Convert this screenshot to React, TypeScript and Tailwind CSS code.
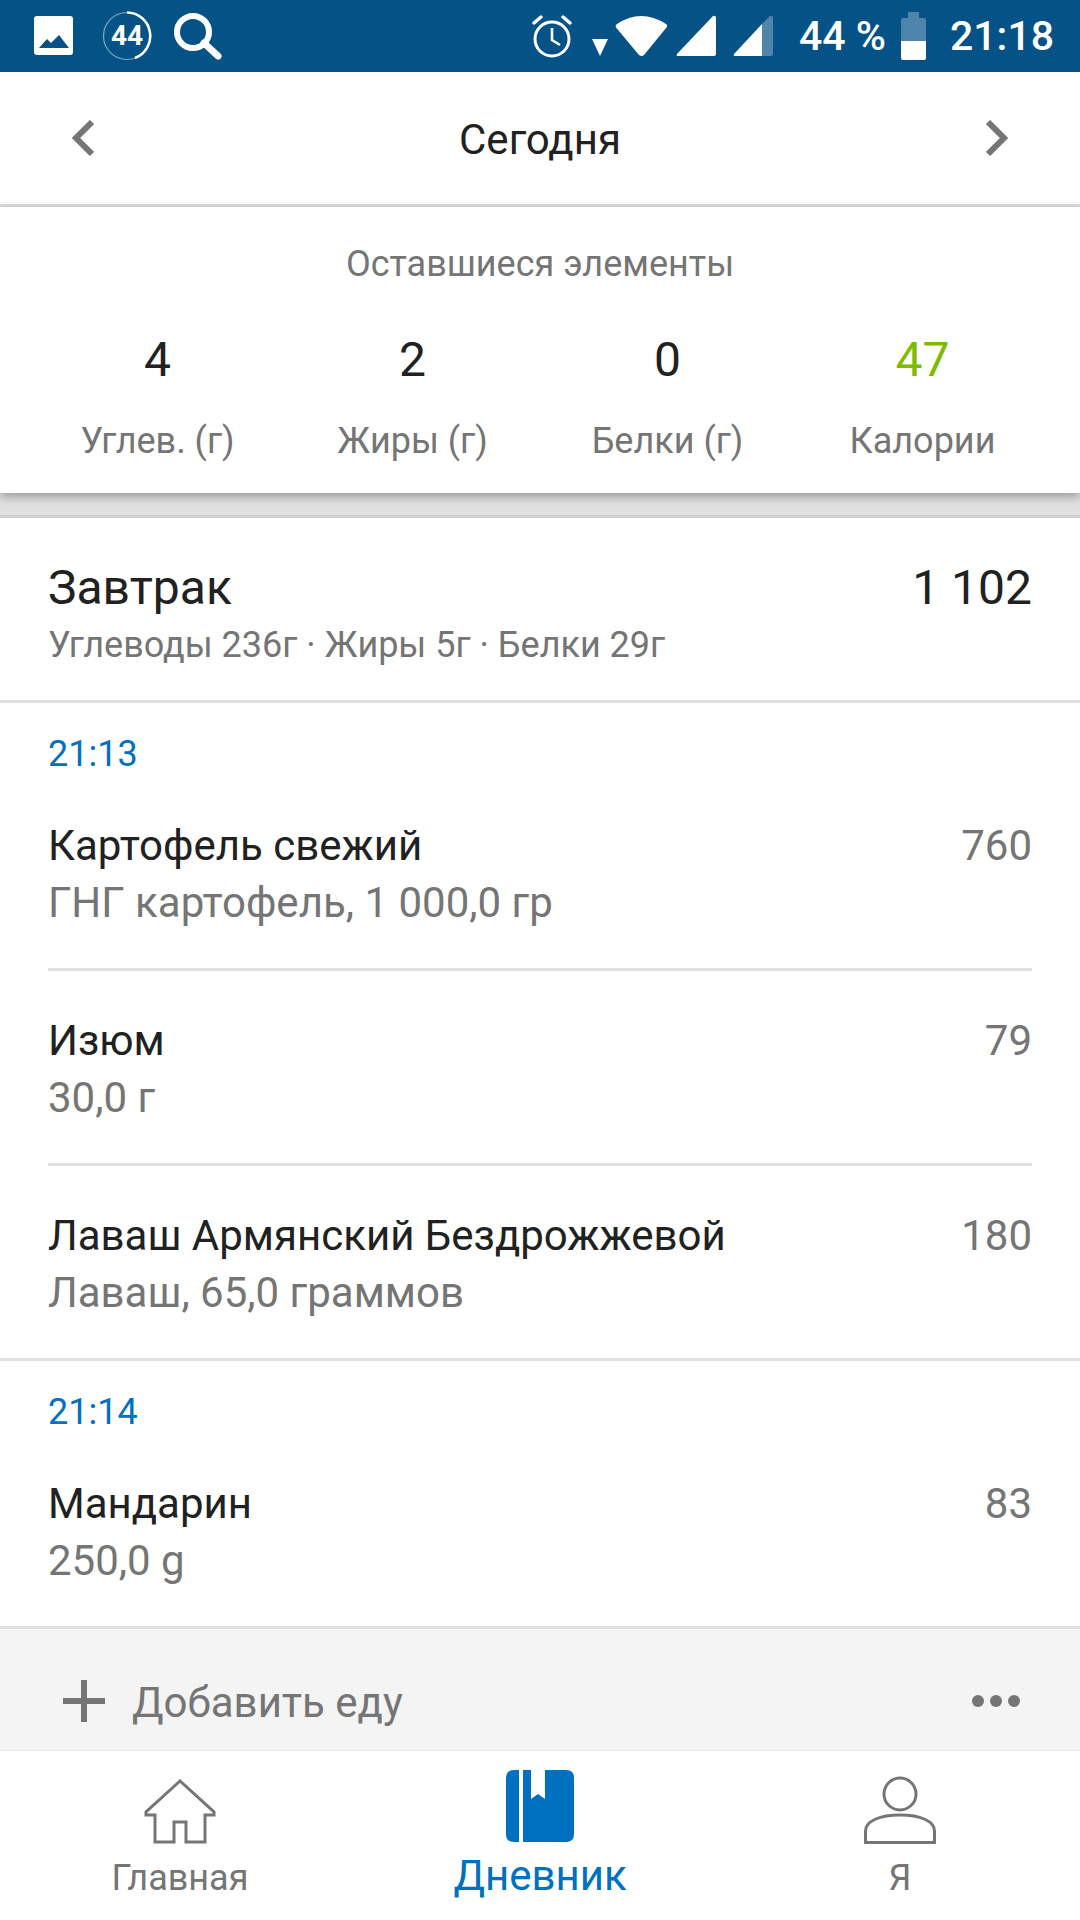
import type { ReactNode } from "react";

const ROBOTO = "font-['Roboto',sans-serif]";

function StatusBar() {
  return (
    <div className="flex h-[72px] items-center justify-between bg-[#055286] pl-[34px] pr-[26px] text-white">
      <div className="flex items-center">
        {/* gallery */}
        <svg className="mb-[1px]" width="39" height="39" viewBox="0 0 39 39">
          <rect width="39" height="39" rx="3" fill="#fff" />
          <path d="M5 32l8-9 4 4 8-8 10 13z" fill="#055286" />
        </svg>
        {/* data counter */}
        <div className="relative ml-[29px] flex h-[50px] w-[50px] items-center justify-center">
          <svg className="absolute inset-0" width="50" height="50" viewBox="0 0 50 50">
            <circle cx="25" cy="25" r="23.500" fill="none" stroke="#7fa8c2" strokeWidth="1.200" />
            <path d="M25 1.500A23.500 23.500 0 0 1 33 47" fill="none" stroke="#fff" strokeWidth="2.600" />
          </svg>
          <span className={`${ROBOTO} text-[28px] leading-none font-bold`}>44</span>
        </div>
        {/* search */}
        <svg className="ml-[22px]" width="48" height="47" viewBox="0 0 48 47">
          <circle cx="19" cy="19" r="16" fill="none" stroke="#fff" strokeWidth="6" />
          <path d="M30 30l14 13" stroke="#fff" strokeWidth="7" strokeLinecap="round" />
        </svg>
      </div>
      <div className="flex items-center">
        {/* alarm */}
        <svg width="40" height="43" viewBox="0 0 40 43">
          <circle cx="20" cy="24" r="17" fill="none" stroke="#fff" strokeWidth="3" />
          <path d="M20 13v12l8 5" fill="none" stroke="#fff" strokeWidth="2.600" />
          <path d="M2 8l7-6M38 8l-7-6" stroke="#fff" strokeWidth="3.400" strokeLinecap="round" />
        </svg>
        {/* wifi with arrow */}
        <svg className="ml-[20px]" width="75" height="42" viewBox="0 0 75 42">
          <path d="M0 24h16l-8 17z" fill="#fff" />
          <path d="M25 9Q49-7 74 9q2 1.500 .500 3.500L52 40q-2.500 2-5 0L24 12.500q-1-2 1-3.500z" fill="#fff" />
        </svg>
        {/* signal */}
        <svg className="ml-[9px]" width="40" height="42" viewBox="0 0 40 42">
          <path d="M37 1q3-1 3 2v36q0 2-2 2H2q-2 0-1-2z" fill="#fff" />
        </svg>
        <svg className="ml-[17px]" width="40" height="42" viewBox="0 0 40 42">
          <path d="M37 1q3-1 3 2v36q0 2-2 2H29V9z" fill="#5085ab" />
          <path d="M29 9v32H2q-2 0-1-2z" fill="#fff" />
        </svg>
        <span className={`${ROBOTO} ml-[26px] text-[41px] leading-none font-medium`}>44 %</span>
        <div className="ml-[15px] flex w-[25px] flex-col items-center">
          <div className="h-[6px] w-[11px] rounded-t-[1px] bg-[#5085ab]" />
          <div className="h-[23px] w-full rounded-t-[2px] bg-[#5085ab]" />
          <div className="h-[19px] w-full rounded-b-[2px] bg-white" />
        </div>
        <span className={`${ROBOTO} ml-[24px] text-[41px] leading-none font-medium`}>21:18</span>
      </div>
    </div>
  );
}

function DateHeader() {
  return (
    <div className="flex h-[135px] items-center justify-between border-b-[3px] border-[#e0e0e0] px-[72px]">
      <svg width="22" height="36" viewBox="0 0 22 36">
        <path d="M20 2L4 18l16 16" fill="none" stroke="#757575" strokeWidth="6" />
      </svg>
      <span className="pt-[2px] text-[42px] text-[#212121]">Сегодня</span>
      <svg width="22" height="36" viewBox="0 0 22 36">
        <path d="M2 2l16 16L2 34" fill="none" stroke="#757575" strokeWidth="6" />
      </svg>
    </div>
  );
}

const remaining = [
  { value: "4", label: "Углев. (г)" },
  { value: "2", label: "Жиры (г)" },
  { value: "0", label: "Белки (г)" },
  { value: "47", label: "Калории", green: true },
];

function Remaining() {
  return (
    <div className="relative h-[286px] bg-white shadow-[0_3px_10px_rgba(0,0,0,0.35)]">
      <p className="pt-[37px] text-center text-[36px] leading-[40px] text-[#757575]">Оставшиеся элементы</p>
      <div className="mt-[50px] grid grid-cols-4 px-[30px]">
        {remaining.map((item) => (
          <div key={item.label} className="flex flex-col items-center">
            <span className={`text-[48px] leading-[52px] ${item.green ? "text-[#7fba00]" : "text-[#212121]"}`}>
              {item.value}
            </span>
            <span className="mt-[35px] text-[36px] leading-[40px] text-[#757575]">{item.label}</span>
          </div>
        ))}
      </div>
    </div>
  );
}

function MealHeader() {
  return (
    <div className="flex h-[188px] justify-between border-y-[3px] border-t-[#cfcfcf] border-b-[#e0e0e0] px-[48px] pt-[42px]">
      <div>
        <p className="text-[48px] leading-[56px] text-[#212121]">Завтрак</p>
        <p className="mt-[8px] text-[36px] leading-[42px] text-[#757575]">Углеводы 236г · Жиры 5г · Белки 29г</p>
      </div>
      <span className="text-[48px] leading-[56px] text-[#212121]">1 102</span>
    </div>
  );
}

function FoodRow({ name, detail, kcal, last }: { name: string; detail: string; kcal: string; last?: boolean }) {
  return (
    <div className={`flex justify-between pt-[45px] ${last ? "h-[192px]" : "h-[195px] border-b-[3px] border-[#e0e0e0]"}`}>
      <div>
        <p className="text-[42px] leading-[50px] text-[#212121]">{name}</p>
        <p className="mt-[7px] text-[42px] leading-[50px] text-[#757575]">{detail}</p>
      </div>
      <span className="text-[42px] leading-[50px] text-[#757575]">{kcal}</span>
    </div>
  );
}

function TimeGroup({ time, children }: { time: string; children: ReactNode }) {
  return (
    <div className="border-b-[3px] border-[#e0e0e0] px-[48px]">
      <p className="flex h-[73px] items-end pb-[1px] text-[36px] leading-[42px] text-[#0070c0]">{time}</p>
      {children}
    </div>
  );
}

function HomeIcon() {
  return (
    <svg width="72" height="65" viewBox="0 0 72 65">
      <path d="M36 2L2 33v3h9v27h19V43h12v20h19V36h9v-3z" fill="none" stroke="#757575" strokeWidth="3" />
    </svg>
  );
}

function DiaryIcon() {
  return (
    <svg width="68" height="72" viewBox="0 0 68 72">
      <path d="M8 0h5v72H8Q0 72 0 64V8Q0 0 8 0z" fill="#0070c0" />
      <path d="M17 0h8v29l7-5 7 5V0h21q8 0 8 8v56q0 8-8 8H17z" fill="#0070c0" />
    </svg>
  );
}

function PersonIcon() {
  return (
    <svg width="72" height="68" viewBox="0 0 72 68">
      <circle cx="36" cy="18" r="16" fill="none" stroke="#757575" strokeWidth="3" />
      <path d="M1.500 66.500V55C1.500 45 16 39 36 39s34.500 6 34.500 16v11.500z" fill="none" stroke="#757575" strokeWidth="3" />
    </svg>
  );
}

function BottomNav() {
  return (
    <div className="relative grid h-[169px] grid-cols-3 bg-white shadow-[0_-1px_3px_rgba(0,0,0,0.06)]">
      <div className="flex flex-col items-center pt-[28px]">
        <HomeIcon />
        <span className="mt-[14px] text-[36px] leading-[40px] text-[#757575]">Главная</span>
      </div>
      <div className="flex flex-col items-center pt-[19px]">
        <DiaryIcon />
        <span className="mt-[9px] text-[42px] leading-[50px] text-[#0070c0]">Дневник</span>
      </div>
      <div className="flex flex-col items-center pt-[25px]">
        <PersonIcon />
        <span className="mt-[14px] text-[36px] leading-[40px] text-[#757575]">Я</span>
      </div>
    </div>
  );
}

export default function App() {
  return (
    <div className={`${ROBOTO} flex h-[1920px] w-[1080px] flex-col overflow-hidden bg-white`}>
      <StatusBar />
      <DateHeader />
      <Remaining />
      <div className="h-[22px] bg-[#e0e0e0]" />
      <MealHeader />
      <TimeGroup time="21:13">
        <FoodRow name="Картофель свежий" detail="ГНГ картофель, 1 000,0 гр" kcal="760" />
        <FoodRow name="Изюм" detail="30,0 г" kcal="79" />
        <FoodRow name="Лаваш Армянский Бездрожжевой" detail="Лаваш, 65,0 граммов" kcal="180" last />
      </TimeGroup>
      <TimeGroup time="21:14">
        <FoodRow name="Мандарин" detail="250,0 g" kcal="83" last />
      </TimeGroup>
      {/* add food */}
      <div className="flex h-[122px] items-center justify-between bg-[#f4f4f4] pl-[63px] pr-[60px] pt-[22px]">
        <div className="flex items-center">
          <div className="relative h-[42px] w-[42px]">
            <div className="absolute left-0 top-[18px] h-[6px] w-full bg-[#757575]" />
            <div className="absolute left-[18px] top-0 h-full w-[6px] bg-[#757575]" />
          </div>
          <span className="ml-[27px] mt-[4px] text-[42px] leading-[50px] text-[#757575]">Добавить еду</span>
        </div>
        <div className="flex gap-[6px]">
          <div className="h-[12px] w-[12px] rounded-full bg-[#757575]" />
          <div className="h-[12px] w-[12px] rounded-full bg-[#757575]" />
          <div className="h-[12px] w-[12px] rounded-full bg-[#757575]" />
        </div>
      </div>
      <BottomNav />
    </div>
  );
}
